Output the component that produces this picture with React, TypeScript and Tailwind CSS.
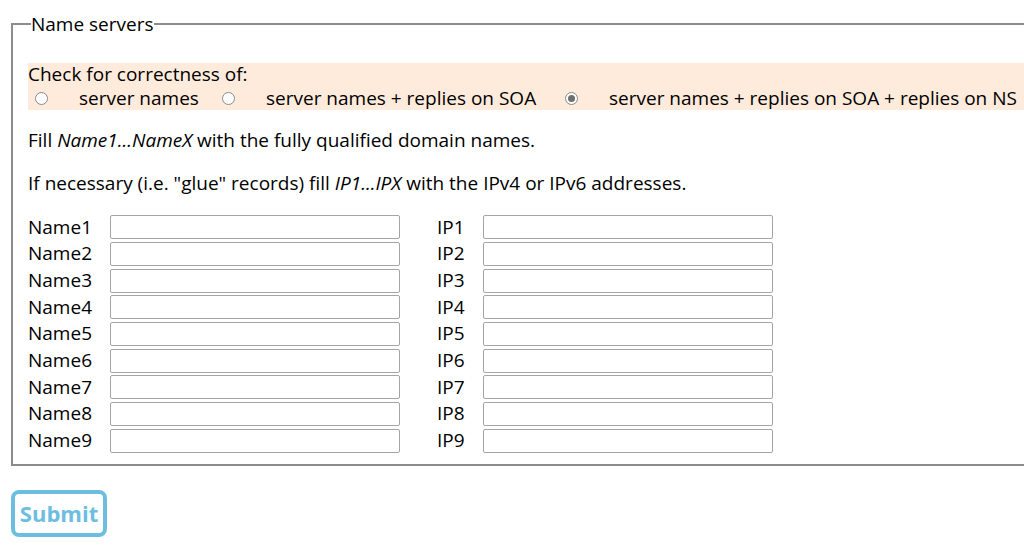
import React from 'react';

const rows = [1, 2, 3, 4, 5, 6, 7, 8, 9];

const modes = [
  { label: 'server names', width: 'w-[187px]', checked: false },
  { label: 'server names + replies on SOA', width: 'w-[343px]', checked: false },
  { label: 'server names + replies on SOA + replies on NS', width: 'w-[520px]', checked: true },
];

function Radio({ checked }: { checked: boolean }) {
  return (
    <span className="ml-[7px] flex h-[13px] w-[13px] shrink-0 items-center justify-center rounded-full border border-[#8a8a8a] bg-white">
      {checked && <span className="h-[7px] w-[7px] rounded-full bg-[#6f6f6f]" />}
    </span>
  );
}

export default function App() {
  return (
    <div className="h-[556px] w-[1024px] overflow-hidden bg-white text-[19px] leading-[23.5px] text-black [font-family:'Open_Sans',sans-serif]">
      <div className="pl-[11px] pt-[12px]">
        <fieldset className="w-[1100px] border-2 border-[#8c8c8c] pb-[10px] pl-[15px]">
          <legend className="ml-[3px] leading-[24px]">Name servers</legend>

          {/* mode selection */}
          <div className="mt-[27px] bg-[#feebdc]">
            <div>Check for correctness of:</div>
            <div className="flex items-center">
              {modes.map((m) => (
                <label key={m.label} className={`flex shrink-0 items-center ${m.width}`}>
                  <Radio checked={m.checked} />
                  <span className="ml-[31px] whitespace-nowrap">{m.label}</span>
                </label>
              ))}
            </div>
          </div>

          <p className="mt-[19px]">
            Fill <i>Name1...NameX</i> with the fully qualified domain names.
          </p>
          <p className="mt-[19px]">
            If necessary (i.e. "glue" records) fill <i>IP1...IPX</i> with the IPv4 or IPv6 addresses.
          </p>

          {/* name / ip table */}
          <div className="mt-[19px] grid grid-cols-[82px_290px_37px_46px_290px] auto-rows-[26.67px] items-center">
            {rows.map((n) => (
              <React.Fragment key={n}>
                <span>Name{n}</span>
                <input className="h-6 w-[290px] rounded-[2px] border border-[#a5a5a5] bg-white" />
                <span />
                <span>IP{n}</span>
                <input className="h-6 w-[290px] rounded-[2px] border border-[#a5a5a5] bg-white" />
              </React.Fragment>
            ))}
          </div>
        </fieldset>

        <button className="mt-[24px] h-[47px] w-[96px] rounded-[8px] border-4 border-[#6cbee1] bg-white text-[22px] font-bold text-[#6cbee1]">
          Submit
        </button>
      </div>
    </div>
  );
}
